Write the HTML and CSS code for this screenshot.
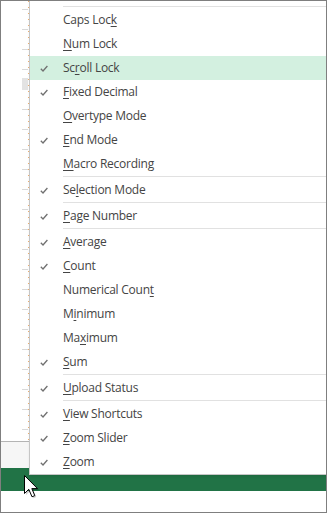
FILE: index.html
```html
<!DOCTYPE html>
<html lang="en">
<head>
    <meta charset="UTF-8">
    <title>Status Bar Options</title>
    <link rel="stylesheet" href="styles.css">
</head>
<body>
    <div class="window">
        <div class="sheet">
            <div class="sheet-margin"></div>
            <div class="sheet-cells"><div class="cell-mark"></div></div>
            <div class="page-break"></div>
            <div class="sheet-rest"></div>
        </div>
        <div class="tabs"></div>
        <div class="statusbar"></div>
        <div class="below"></div>

        <!-- customize status bar menu -->
        <ul class="menu">
            <li class="sep"></li>
            <li class="item"><span class="check"></span>Caps Loc<u>k</u></li>
            <li class="item"><span class="check"></span><u>N</u>um Lock</li>
            <li class="item hover"><span class="check on"></span>Sc<u>r</u>oll Lock</li>
            <li class="item"><span class="check on"></span><u>F</u>ixed Decimal</li>
            <li class="item"><span class="check"></span><u>O</u>vertype Mode</li>
            <li class="item"><span class="check on"></span><u>E</u>nd Mode</li>
            <li class="item"><span class="check"></span><u>M</u>acro Recording</li>
            <li class="sep"></li>
            <li class="item"><span class="check on"></span>Se<u>l</u>ection Mode</li>
            <li class="sep"></li>
            <li class="item"><span class="check on"></span><u>P</u>age Number</li>
            <li class="sep"></li>
            <li class="item"><span class="check on"></span><u>A</u>verage</li>
            <li class="item"><span class="check on"></span><u>C</u>ount</li>
            <li class="item"><span class="check"></span>Numerical Coun<u>t</u></li>
            <li class="item"><span class="check"></span>M<u>i</u>nimum</li>
            <li class="item"><span class="check"></span>Ma<u>x</u>imum</li>
            <li class="item"><span class="check on"></span><u>S</u>um</li>
            <li class="sep"></li>
            <li class="item"><span class="check on"></span><u>U</u>pload Status</li>
            <li class="sep"></li>
            <li class="item"><span class="check on"></span><u>V</u>iew Shortcuts</li>
            <li class="item"><span class="check on"></span><u>Z</u>oom Slider</li>
            <li class="item"><span class="check on"></span><u>Z</u>oom</li>
        </ul>

        <svg class="cursor" width="18" height="26" viewBox="0 0 18 26">
            <polygon points="1.5,1.5 1.5,19.5 5.8,15.3 9,22.8 11.8,21.6 8.8,14.6 14.5,14.6" fill="#000" opacity="0.18" transform="translate(1.5,1.5)"/>
            <polygon points="1.5,1.5 1.5,19.5 5.8,15.3 9,22.8 11.8,21.6 8.8,14.6 14.5,14.6" fill="#fff" stroke="#000" stroke-width="1" stroke-linejoin="round"/>
        </svg>
    </div>
</body>
</html>
```

FILE: styles.css
```css
/* Excel-like status bar context menu */
:root {
    --frame: #7f7f7f;
    --grid: #d9d9d9;
    --menu-border: #c6c6c6;
    --menu-text: #444444;
    --hover: #d3f0e0;
    --excel-green: #217346;
}

* {
    margin: 0;
    padding: 0;
    box-sizing: border-box;
}

body {
    font-family: "Open Sans", "Noto Sans", sans-serif;
    background: #ffffff;
}

.window {
    position: relative;
    width: 327px;
    height: 513px;
    border: 1px solid var(--frame);
    overflow: hidden;
    display: flex;
    flex-direction: column;
}

.sheet {
    height: 441px;
    display: flex;
    border-bottom: 1px solid #b4b4b4;
}

.sheet-margin {
    width: 21px;
}

.sheet-cells {
    width: 6px;
    background: repeating-linear-gradient(to bottom,
        transparent 0, transparent 8px,
        var(--grid) 8px, var(--grid) 9px,
        transparent 9px, transparent 20px);
}

.cell-mark {
    margin-top: 77px;
    height: 12px;
    background: #e3e3e3;
}

.page-break {
    width: 1px;
    background: repeating-linear-gradient(to bottom,
        #f0b070 0, #f0b070 1px,
        transparent 1px, transparent 6px);
}

.sheet-rest {
    flex: 1;
}

.tabs {
    height: 26px;
    background: #f6f6f6;
}

.statusbar {
    height: 23px;
    background: var(--excel-green);
}

.below {
    flex: 1;
    background: #ffffff;
}

.menu {
    position: absolute;
    left: 28px;
    top: 0;
    right: -10px;
    list-style: none;
    background: #ffffff;
    border-left: 1px solid var(--menu-border);
    border-bottom: 1px solid var(--menu-border);
    box-shadow: 1px 1px 3px rgba(0, 0, 0, 0.12);
    padding-top: 5px;
    font-size: 12px;
    letter-spacing: -0.25px;
    color: var(--menu-text);
}

.sep {
    height: 2px;
    margin-left: 33px;
    border-top: 1px solid #e1e1e1;
}

.item {
    height: 24px;
    padding-bottom: 2px;
    display: flex;
    align-items: center;
    white-space: nowrap;
}

.item u {
    text-underline-offset: 2px;
}

.item.hover {
    background: var(--hover);
}

.check {
    width: 33px;
    height: 22px;
    flex-shrink: 0;
}

.check.on {
    background: url("data:image/svg+xml,%3Csvg xmlns='http://www.w3.org/2000/svg' width='8' height='7'%3E%3Cpolyline points='0.8,3.8 3,6 7.4,1' fill='none' stroke='%23707070' stroke-width='1.3'/%3E%3C/svg%3E") no-repeat 10px 9px;
}

.cursor {
    position: absolute;
    left: 22px;
    top: 473px;
}
```
